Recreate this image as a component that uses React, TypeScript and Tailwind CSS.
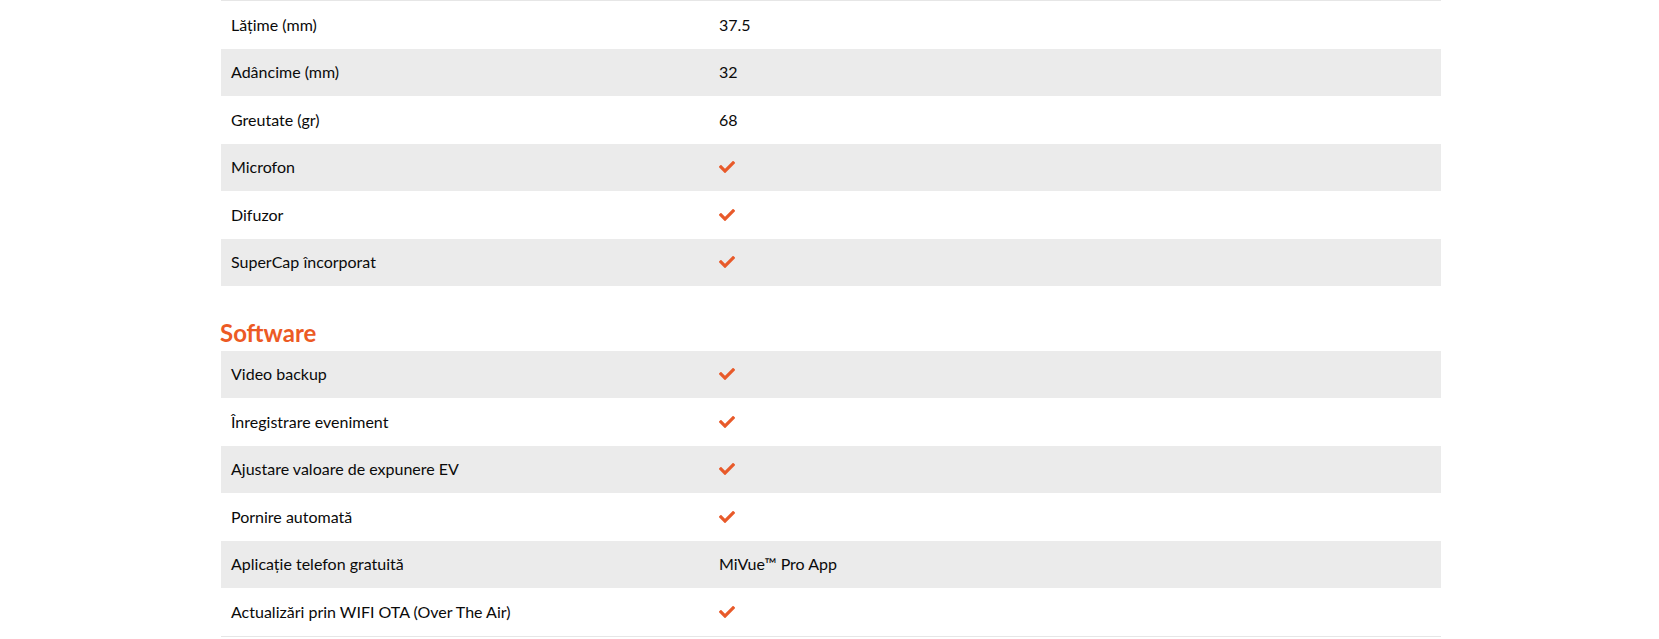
import React from "react";

type Spec = { label: string; value: string | null };

const hardware: Spec[] = [
  { label: "Lățime (mm)", value: "37.5" },
  { label: "Adâncime (mm)", value: "32" },
  { label: "Greutate (gr)", value: "68" },
  { label: "Microfon", value: null },
  { label: "Difuzor", value: null },
  { label: "SuperCap încorporat", value: null },
];

const software: Spec[] = [
  { label: "Video backup", value: null },
  { label: "Înregistrare eveniment", value: null },
  { label: "Ajustare valoare de expunere EV", value: null },
  { label: "Pornire automată", value: null },
  { label: "Aplicație telefon gratuită", value: "MiVue™ Pro App" },
  { label: "Actualizări prin WIFI OTA (Over The Air)", value: null },
];

function Check() {
  return (
    <svg width="16" height="12" viewBox="0 0 512 384" className="block">
      <path
        fill="#e85a2a"
        d="M173.9 373.5L7.5 207.1c-10-10-10-26.2 0-36.2l36.2-36.2c10-10 26.2-10 36.2 0L192 246.8 432.1 6.7c10-10 26.2-10 36.2 0l36.2 36.2c10 10 10 26.2 0 36.2L210.1 373.5c-10 10-26.2 10-36.2 0z"
      />
    </svg>
  );
}

function SpecTable({ rows, firstGray, bordered }: { rows: Spec[]; firstGray: boolean; bordered?: boolean }) {
  return (
    <div className={bordered ? "border-b border-[#e6e6e6]" : ""}>
      {rows.map((row, i) => {
        const gray = firstGray ? i % 2 === 0 : i % 2 === 1;
        return (
          <div
            key={row.label}
            className={`flex items-center h-[47.5px] text-[16px] text-[#0a0a0a] ${gray ? "bg-[#ebebeb]" : "bg-white"}`}
          >
            <div className="w-[40%] pl-[10px]">{row.label}</div>
            <div className="flex-1 pl-[10px]">
              {row.value ? row.value : <Check />}
            </div>
          </div>
        );
      })}
    </div>
  );
}

export default function App() {
  return (
    <div className="w-[1659px] h-[639px] bg-white overflow-hidden" style={{ fontFamily: "Lato, 'Open Sans', sans-serif" }}>
      <div className="w-[1220px] ml-[221px]">
        <div className="border-t border-[#e6e6e6]">
          <SpecTable rows={hardware} firstGray={false} />
        </div>
        <div className="h-[64.5px] flex items-end pb-[3px]">
          <h3 className="text-[24px] leading-[30px] font-bold text-[#ec5a24] -ml-[1px]">Software</h3>
        </div>
        <SpecTable rows={software} firstGray={true} bordered />
      </div>
    </div>
  );
}
